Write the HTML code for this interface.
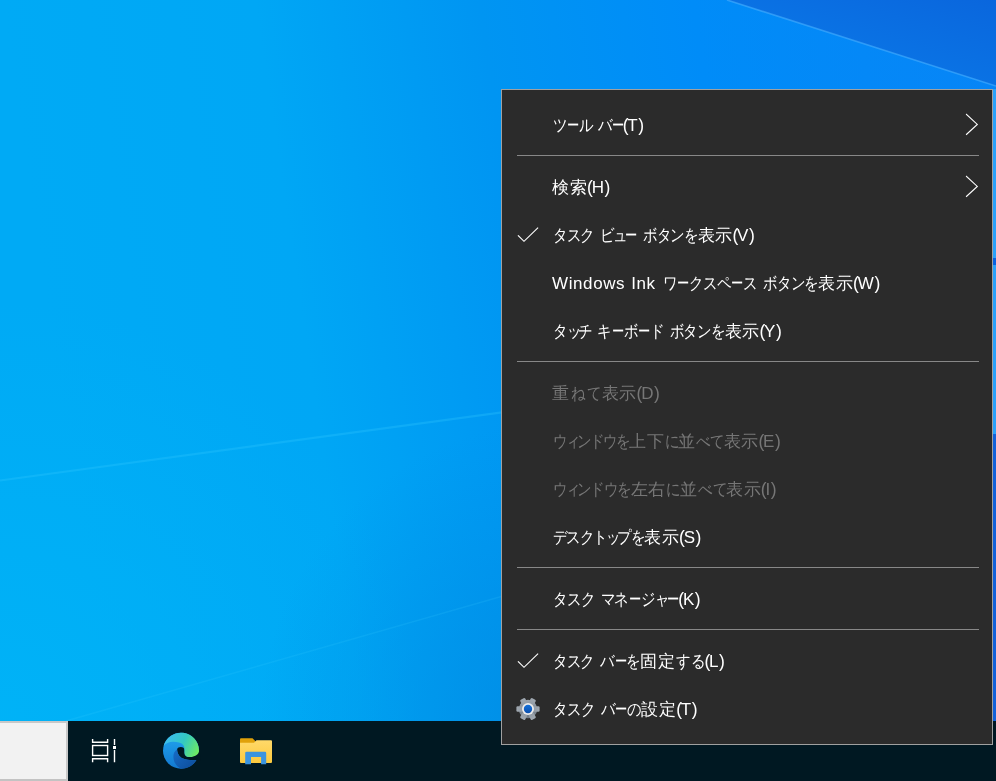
<!DOCTYPE html>
<html lang="ja">
<head>
<meta charset="utf-8">
<style>
html,body{margin:0;padding:0;width:996px;height:781px;overflow:hidden;}
body{position:relative;font-family:"Liberation Sans",sans-serif;background:#00a0f0;}
svg{position:absolute;left:0;top:0;}
#taskbar{position:absolute;left:0;top:721px;width:996px;height:60px;background:#001822;}
#search{position:absolute;left:0;top:721px;width:66px;height:56px;background:#f2f2f2;border-top:2px solid #c8c8c8;border-right:2px solid #c8c8c8;border-bottom:2px solid #c3c3c3;}
#menu{position:absolute;left:501px;top:89px;width:490px;height:654px;background:#2b2b2b;border:1px solid #a0a0a0;}
.it{position:absolute;left:0;width:490px;height:48px;color:#fff;font-size:16.5px;line-height:48px;}
.it span.t{position:absolute;left:50px;top:0px;white-space:nowrap;will-change:transform;}
.dis{color:#767676;}
.t i{display:inline-block;font-style:normal;text-align:center;white-space:nowrap;}
.t b{display:inline-block;font-weight:normal;width:6px;}
.t u{text-decoration:none;display:inline-block;transform:scaleX(0.85);}
.t i.n{text-align:center;}
.t u.v{transform:scaleX(0.72);}
.t .l{font-size:17px;letter-spacing:0.6px;}
.t .p{font-size:17.5px;letter-spacing:-1.2px;}
.sep{position:absolute;left:15px;width:462px;height:1px;background:#888;}
</style>
</head>
<body>
<svg width="996" height="721" viewBox="0 0 996 721">
 <defs>
  <linearGradient id="bgH" x1="0" y1="0" x2="996" y2="-150" gradientUnits="userSpaceOnUse">
   <stop offset="0" stop-color="#00aaf5"/>
   <stop offset="0.25" stop-color="#00a7f5"/>
   <stop offset="0.47" stop-color="#0095f2"/>
   <stop offset="0.68" stop-color="#008cf8"/>
   <stop offset="1" stop-color="#0884f6"/>
  </linearGradient>
  <radialGradient id="bgC" cx="0" cy="721" r="420" gradientUnits="userSpaceOnUse">
   <stop offset="0" stop-color="#00b8f8" stop-opacity="0.6"/>
   <stop offset="1" stop-color="#00b8f8" stop-opacity="0"/>
  </radialGradient>
  <radialGradient id="bgD" cx="560" cy="721" r="300" gradientUnits="userSpaceOnUse">
   <stop offset="0" stop-color="#0088e0" stop-opacity="0.7"/>
   <stop offset="1" stop-color="#0088e0" stop-opacity="0"/>
  </radialGradient>
  <linearGradient id="wedge" x1="860" y1="42.5" x2="903" y2="-92" gradientUnits="userSpaceOnUse">
   <stop offset="0" stop-color="#0a72e4"/>
   <stop offset="1" stop-color="#0a5ed8"/>
  </linearGradient>
 <filter id="blur1" x="-5%" y="-50%" width="110%" height="200%"><feGaussianBlur stdDeviation="0.7"/></filter>
 </defs>
 <rect width="996" height="721" fill="url(#bgH)"/>
 <rect width="996" height="721" fill="url(#bgC)"/>
 <rect width="996" height="721" fill="url(#bgD)"/>
 <polygon points="727,0 996,0 996,86" fill="url(#wedge)"/>
 <line x1="727" y1="0" x2="996" y2="86" stroke="#48b0ff" stroke-width="1.6" opacity="0.6"/>
 <line x1="0" y1="480.5" x2="996" y2="345.4" stroke="#30c8ff" stroke-width="2.2" opacity="0.3" filter="url(#blur1)"/>
 <line x1="66" y1="721" x2="996" y2="455" stroke="#40d0ff" stroke-width="1.5" opacity="0.15"/>
 <rect x="992" y="89" width="4" height="345" fill="#2aa2fa"/>
 <rect x="992" y="258" width="4" height="7" fill="#0a62e0"/>
 <rect x="992" y="434" width="4" height="287" fill="#1262da"/>
</svg>
<div id="taskbar"></div>
<div id="search"></div>
<svg width="996" height="781" viewBox="0 0 996 781">
 <g fill="none" stroke="#fff" stroke-width="1.4">
  <path d="M92.6,739 V742.3 H107.6 V739"/>
  <rect x="92.6" y="745.5" width="15" height="10"/>
  <path d="M92.6,762.3 V758.7 H107.6 V762.3"/>
  <path d="M114.5,739 V745 M114.5,750 V762.3"/>
 </g>
 <rect x="113" y="746" width="3" height="3" fill="#fff"/>
 <defs>
  <linearGradient id="eC" x1="0" y1="10" x2="0" y2="36" gradientUnits="userSpaceOnUse">
   <stop offset="0" stop-color="#1d9ae8"/><stop offset="1" stop-color="#1378d0"/>
  </linearGradient>
  <linearGradient id="eT" x1="2" y1="6" x2="34" y2="22" gradientUnits="userSpaceOnUse">
   <stop offset="0" stop-color="#3dbdf0"/><stop offset="0.5" stop-color="#33c8c2"/><stop offset="1" stop-color="#70ec60"/>
  </linearGradient>
  <linearGradient id="eW" x1="14" y1="18" x2="30" y2="34" gradientUnits="userSpaceOnUse">
   <stop offset="0" stop-color="#1568c2"/><stop offset="1" stop-color="#0e4f9e"/>
  </linearGradient>
  <linearGradient id="fB" x1="0" y1="740" x2="0" y2="763" gradientUnits="userSpaceOnUse">
   <stop offset="0" stop-color="#ffd96a"/><stop offset="1" stop-color="#fcc93e"/>
  </linearGradient>
 </defs>
 <g transform="translate(163,732.7)">
  <circle cx="18" cy="18" r="18" fill="url(#eC)"/>
  <path d="M14.1,16.5 C14.5,15 16,14.3 17.8,14.3 C20,14.3 21.5,15.5 21.5,17.5 L21.5,20 C21.5,22.5 23,24.2 26,24.3 L36.5,18.5 L38,27.5 L33.2,27.3 C29,27.8 24,27.5 20,25.8 C16.5,24.3 14.2,21 14.1,16.5 Z" fill="#001822"/>
  <path d="M14.1,16.5 C11.5,18.5 10.2,21 10.4,24 C10.5,30 14,34.5 18.5,35.99 A18,18 0 0 0 33.4,27.3 C29,27.8 24,27.5 20,25.8 C16.5,24.3 14.2,21 14.1,16.5 Z" fill="url(#eW)"/>
  <path d="M0.6,13.4 C3,10.2 7,9 10.4,9.1 C14.5,9.2 18,10 20,12 C21.2,13.3 21.5,15 21.5,17.5 L21.5,20 C21.5,22.5 23,24.2 26,24.3 C29,24.5 32.5,23.5 34.5,21.5 C35.5,20.5 35.9,19.5 36,18 A18,18 0 0 0 0.6,13.4 Z" fill="url(#eT)"/>
 </g>
 <path d="M241,738.2 H252.5 L255.5,741.2 V743 H240 V739.2 Q240,738.2 241,738.2 Z" fill="#e0a10a"/>
 <path d="M240,742.8 H254 L256.5,740.2 H271 Q272,740.2 272,741.2 V762 Q272,763 271,763 H241 Q240,763 240,762 Z" fill="url(#fB)"/>
 <path d="M245.2,764.3 V753 Q245.2,751.8 246.4,751.8 H265 Q266.2,751.8 266.2,753 V764.3 H261.1 V756.9 H251 V764.3 Z" fill="#3b94e0"/>
</svg>
<div id="menu">
 <div class="it" style="top:11px"><span class="t"><i class="n" style="width:13.34px"><u>ツ</u></i><i class="n" style="width:12.34px"><u class="v">ー</u></i><i class="n" style="width:13.34px"><u>ル</u></i><b> </b><i class="n" style="width:13.34px"><u>バ</u></i><i class="n" style="width:12.34px"><u class="v">ー</u></i><span class="p">(</span><span class="l">T</span><span class="p">)</span></span></div>
 <div class="sep" style="top:65px"></div>
 <div class="it" style="top:73px"><span class="t"><i style="width:17.50px">検</i><i style="width:17.50px">索</i><span class="p">(</span><span class="l">H</span><span class="p">)</span></span></div>
 <div class="it" style="top:121px"><span class="t"><i class="n" style="width:13.60px"><u>タ</u></i><i class="n" style="width:13.60px"><u>ス</u></i><i class="n" style="width:13.60px"><u>ク</u></i><b> </b><i class="n" style="width:13.60px"><u>ビ</u></i><i class="n" style="width:11.10px"><u>ュ</u></i><i class="n" style="width:12.60px"><u class="v">ー</u></i><b> </b><i class="n" style="width:13.60px"><u>ボ</u></i><i class="n" style="width:13.60px"><u>タ</u></i><i class="n" style="width:13.60px"><u>ン</u></i><i class="n" style="width:14.60px"><u>を</u></i><i style="width:17.50px">表</i><i style="width:17.50px">示</i><span class="p">(</span><span class="l">V</span><span class="p">)</span></span></div>
 <div class="it" style="top:169px"><span class="t"><span class="l">Windows</span><b> </b><span class="l">Ink</span><b> </b><i class="n" style="width:13.77px"><u>ワ</u></i><i class="n" style="width:12.77px"><u class="v">ー</u></i><i class="n" style="width:13.77px"><u>ク</u></i><i class="n" style="width:13.77px"><u>ス</u></i><i class="n" style="width:13.77px"><u>ペ</u></i><i class="n" style="width:12.77px"><u class="v">ー</u></i><i class="n" style="width:13.77px"><u>ス</u></i><b> </b><i class="n" style="width:13.77px"><u>ボ</u></i><i class="n" style="width:13.77px"><u>タ</u></i><i class="n" style="width:13.77px"><u>ン</u></i><i class="n" style="width:14.77px"><u>を</u></i><i style="width:17.50px">表</i><i style="width:17.50px">示</i><span class="p">(</span><span class="l">W</span><span class="p">)</span></span></div>
 <div class="it" style="top:217px"><span class="t"><i class="n" style="width:13.67px"><u>タ</u></i><i class="n" style="width:11.17px"><u>ッ</u></i><i class="n" style="width:13.67px"><u>チ</u></i><b> </b><i class="n" style="width:13.67px"><u>キ</u></i><i class="n" style="width:12.67px"><u class="v">ー</u></i><i class="n" style="width:13.67px"><u>ボ</u></i><i class="n" style="width:12.67px"><u class="v">ー</u></i><i class="n" style="width:13.67px"><u>ド</u></i><b> </b><i class="n" style="width:13.67px"><u>ボ</u></i><i class="n" style="width:13.67px"><u>タ</u></i><i class="n" style="width:13.67px"><u>ン</u></i><i class="n" style="width:14.67px"><u>を</u></i><i style="width:17.50px">表</i><i style="width:17.50px">示</i><span class="p">(</span><span class="l">Y</span><span class="p">)</span></span></div>
 <div class="sep" style="top:271px"></div>
 <div class="it dis" style="top:279px"><span class="t"><i style="width:17.50px">重</i><i class="n" style="width:16.00px"><u>ね</u></i><i class="n" style="width:16.00px"><u>て</u></i><i style="width:17.50px">表</i><i style="width:17.50px">示</i><span class="p">(</span><span class="l">D</span><span class="p">)</span></span></div>
 <div class="it dis" style="top:327px"><span class="t"><i class="n" style="width:13.06px"><u>ウ</u></i><i class="n" style="width:10.56px"><u>ィ</u></i><i class="n" style="width:13.06px"><u>ン</u></i><i class="n" style="width:13.06px"><u>ド</u></i><i class="n" style="width:13.06px"><u>ウ</u></i><i class="n" style="width:14.06px"><u>を</u></i><i style="width:17.50px">上</i><i style="width:17.50px">下</i><i class="n" style="width:14.06px"><u>に</u></i><i style="width:17.50px">並</i><i class="n" style="width:14.06px"><u>べ</u></i><i class="n" style="width:14.06px"><u>て</u></i><i style="width:17.50px">表</i><i style="width:17.50px">示</i><span class="p">(</span><span class="l">E</span><span class="p">)</span></span></div>
 <div class="it dis" style="top:375px"><span class="t"><i class="n" style="width:13.32px"><u>ウ</u></i><i class="n" style="width:10.82px"><u>ィ</u></i><i class="n" style="width:13.32px"><u>ン</u></i><i class="n" style="width:13.32px"><u>ド</u></i><i class="n" style="width:13.32px"><u>ウ</u></i><i class="n" style="width:14.32px"><u>を</u></i><i style="width:17.50px">左</i><i style="width:17.50px">右</i><i class="n" style="width:14.32px"><u>に</u></i><i style="width:17.50px">並</i><i class="n" style="width:14.32px"><u>べ</u></i><i class="n" style="width:14.32px"><u>て</u></i><i style="width:17.50px">表</i><i style="width:17.50px">示</i><span class="p">(</span><span class="l">I</span><span class="p">)</span></span></div>
 <div class="it" style="top:423px"><span class="t"><i class="n" style="width:13.36px"><u>デ</u></i><i class="n" style="width:13.36px"><u>ス</u></i><i class="n" style="width:13.36px"><u>ク</u></i><i class="n" style="width:13.36px"><u>ト</u></i><i class="n" style="width:10.86px"><u>ッ</u></i><i class="n" style="width:13.36px"><u>プ</u></i><i class="n" style="width:14.36px"><u>を</u></i><i style="width:17.50px">表</i><i style="width:17.50px">示</i><span class="p">(</span><span class="l">S</span><span class="p">)</span></span></div>
 <div class="sep" style="top:477px"></div>
 <div class="it" style="top:485px"><span class="t"><i class="n" style="width:13.86px"><u>タ</u></i><i class="n" style="width:13.86px"><u>ス</u></i><i class="n" style="width:13.86px"><u>ク</u></i><b> </b><i class="n" style="width:13.86px"><u>マ</u></i><i class="n" style="width:13.86px"><u>ネ</u></i><i class="n" style="width:12.86px"><u class="v">ー</u></i><i class="n" style="width:13.86px"><u>ジ</u></i><i class="n" style="width:11.36px"><u>ャ</u></i><i class="n" style="width:12.86px"><u class="v">ー</u></i><span class="p">(</span><span class="l">K</span><span class="p">)</span></span></div>
 <div class="sep" style="top:539px"></div>
 <div class="it" style="top:547px"><span class="t"><i class="n" style="width:13.68px"><u>タ</u></i><i class="n" style="width:13.68px"><u>ス</u></i><i class="n" style="width:13.68px"><u>ク</u></i><b> </b><i class="n" style="width:13.68px"><u>バ</u></i><i class="n" style="width:12.68px"><u class="v">ー</u></i><i class="n" style="width:14.68px"><u>を</u></i><i style="width:17.50px">固</i><i style="width:17.50px">定</i><i class="n" style="width:14.68px"><u>す</u></i><i class="n" style="width:14.68px"><u>る</u></i><span class="p">(</span><span class="l">L</span><span class="p">)</span></span></div>
 <div class="it" style="top:595px"><span class="t"><i class="n" style="width:13.87px"><u>タ</u></i><i class="n" style="width:13.87px"><u>ス</u></i><i class="n" style="width:13.87px"><u>ク</u></i><b> </b><i class="n" style="width:13.87px"><u>バ</u></i><i class="n" style="width:12.87px"><u class="v">ー</u></i><i class="n" style="width:14.87px"><u>の</u></i><i style="width:17.50px">設</i><i style="width:17.50px">定</i><span class="p">(</span><span class="l">T</span><span class="p">)</span></span></div>
</div>
<svg width="996" height="781" viewBox="0 0 996 781">
 <g fill="none" stroke="#fff" stroke-width="1.1" stroke-linecap="square">
  <path d="M966.5,114.4 L977.3,124.4 L966.5,134.4"/>
  <path d="M966.5,176.4 L977.3,186.4 L966.5,196.4"/>
  <path d="M518.3,235.7 L524,241.3 L537.7,228"/>
  <path d="M518.3,661.7 L524,667.3 L537.7,654"/>
 </g>
 <defs>
  <linearGradient id="gG" x1="0" y1="-12" x2="0" y2="12" gradientUnits="userSpaceOnUse">
   <stop offset="0" stop-color="#a2aab2"/><stop offset="1" stop-color="#697480"/>
  </linearGradient>
  <linearGradient id="gB" x1="0" y1="705" x2="0" y2="713" gradientUnits="userSpaceOnUse">
   <stop offset="0" stop-color="#1470d8"/><stop offset="1" stop-color="#0a4fae"/>
  </linearGradient>
 </defs>
 <g transform="translate(528,709)" fill="url(#gG)">
  <circle r="9.2"/>
  <rect x="-2.8" y="-11.6" width="5.6" height="6" rx="1.2" transform="rotate(30)"/>
  <rect x="-2.8" y="-11.6" width="5.6" height="6" rx="1.2" transform="rotate(90)"/>
  <rect x="-2.8" y="-11.6" width="5.6" height="6" rx="1.2" transform="rotate(150)"/>
  <rect x="-2.8" y="-11.6" width="5.6" height="6" rx="1.2" transform="rotate(210)"/>
  <rect x="-2.8" y="-11.6" width="5.6" height="6" rx="1.2" transform="rotate(270)"/>
  <rect x="-2.8" y="-11.6" width="5.6" height="6" rx="1.2" transform="rotate(330)"/>
 </g>
 <circle cx="528" cy="709" r="6" fill="#ececec"/>
 <circle cx="528" cy="709" r="4.2" fill="url(#gB)"/>
</svg>
</body>
</html>
